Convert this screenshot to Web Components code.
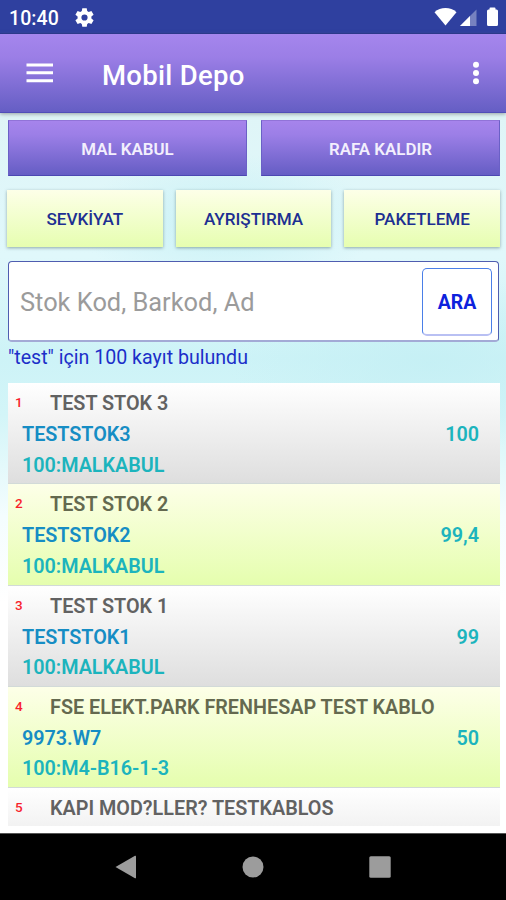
<!DOCTYPE html>
<html lang="tr">
<head>
<meta charset="UTF-8">
<title>Mobil Depo</title>
<style>
    body {
        margin: 0;
        font-family: Roboto, "Noto Sans", sans-serif;
    }
</style>
</head>
<body>
<depo-app></depo-app>

<script>
class StatusBar extends HTMLElement {
    constructor() {
        super();
        this.attachShadow({ mode: 'open' });
        this.shadowRoot.innerHTML = `
        <style>
            :host {
                display: flex;
                align-items: center;
                flex: none;
                box-sizing: border-box;
                height: 34px;
                padding: 1px 7px 0 9px;
                background: #2f409f;
                border-bottom: 1px solid #263592;
                color: #fff;
            }
            .time { font-size: 19.5px; font-weight: 500; width: 66px; letter-spacing: 0.1px; padding-top: 2px; }
            .space { flex: 1; }
            svg { display: block; fill: #fff; }
        </style>
        <span class="time">10:40</span>
        <svg width="19" height="19" viewBox="0 0 19 19">
            <path fill-rule="evenodd" d="M7.3.3h4.4l.5 2.8 1.5.9 2.7-1 2.2 3.8-2.2 1.8v1.8l2.2 1.8-2.2 3.8-2.7-1-1.5.9-.5 2.8H7.3l-.5-2.8-1.5-.9-2.7 1L.4 12.2l2.2-1.8V8.6L.4 6.8 2.6 3l2.7 1 1.500-.9zM9.5 6.400a3.100 3.100 0 1 0 0 6.200 3.100 3.100 0 0 0 0-6.200z"/>
        </svg>
        <span class="space"></span>
        <svg width="65" height="22" viewBox="0 0 65 22">
            <path d="M.5 6.2C6.5.6 16.5.6 22.5 6.2L11.5 19.5z"/>
            <path d="M26 20L42.5 3.5V20z" fill-opacity=".35"/>
            <path d="M26 20L36 10V20z"/>
            <path d="M53 5Q53 3.5 54.5 3.5H55.5V2.5Q55.5 1.5 56.5 1.5H60.5Q61.5 1.5 61.5 2.5V3.5H62.5Q64 3.5 64 5V18.5Q64 20 62.5 20H54.5Q53 20 53 18.5z"/>
        </svg>
        `;
    }
}
customElements.define('status-bar', StatusBar);

class AppBar extends HTMLElement {
    constructor() {
        super();
        this.attachShadow({ mode: 'open' });
        this.shadowRoot.innerHTML = `
        <style>
            :host {
                display: flex;
                align-items: center;
                flex: none;
                box-sizing: border-box;
                height: 79px;
                padding: 0 26px;
                background: linear-gradient(#a586ed, #9b7ee6 30%, #655ec4);
                border-bottom: 1px solid #504eb8;
                box-shadow: 0 1px 4px rgba(90, 90, 90, 0.55);
                color: #fff;
            }
            .title { flex: 1; padding: 4px 0 0 49px; font-size: 27.5px; font-weight: 500; letter-spacing: 0.3px; }
            svg { display: block; fill: #fff; }
        </style>
        <svg width="27" height="20" viewBox="0 0 27 20">
            <path d="M.5.5H27v3H.5zM.5 8.300H27v3H.5zM.5 16.200H27v3H.5z"/>
        </svg>
        <span class="title"><slot></slot></span>
        <svg width="8" height="24" viewBox="0 0 8 24">
            <circle cx="4" cy="3.7" r="3"/><circle cx="4" cy="12" r="3"/><circle cx="4" cy="20.3" r="3"/>
        </svg>
        `;
    }
}
customElements.define('app-bar', AppBar);

class MenuButton extends HTMLElement {
    constructor() {
        super();
        this.attachShadow({ mode: 'open' });
        this.shadowRoot.innerHTML = `
        <style>
            :host {
                display: block;
                flex: 1 1 0;
                height: 57px;
                font-size: 17.1px;
                font-weight: 500;
            }
            :host([primary]) { height: 56px; font-size: 16.9px; font-weight: 600; }
            button {
                display: block;
                box-sizing: border-box;
                width: 100%;
                height: 100%;
                padding: 1px 0 0;
                border: 0;
                font: inherit;
                color: #1d2f92;
                background: linear-gradient(#fdffe8, #e6feb0);
                box-shadow: 0 1px 3px rgba(60, 90, 90, 0.5);
            }
            :host([primary]) button {
                padding-top: 2px;
                color: #f3effd;
                background: linear-gradient(#a684ec, #9c7fe7 25%, #655dc4);
                border: 1px solid #6a60c6;
                border-top-color: #9173d8;
                border-bottom-color: #4c47b2;
                box-shadow: none;
            }
        </style>
        <button><slot></slot></button>
        `;
    }
}
customElements.define('menu-button', MenuButton);

class SearchBox extends HTMLElement {
    constructor() {
        super();
        this.attachShadow({ mode: 'open' });
        this.shadowRoot.innerHTML = `
        <style>
            :host {
                display: flex;
                align-items: center;
                box-sizing: border-box;
                height: 81px;
                margin-right: 1px;
                padding: 1px 6px 0 11px;
                background: #fff;
                border: 1px solid #4f5db0;
                border-bottom: 2px solid #a3aad6;
                border-radius: 4px;
            }
            .hint { flex: 1; font-size: 25.4px; color: #9b9b9b; padding-top: 1px; }
            button {
                box-sizing: border-box;
                width: 70px;
                height: 68px;
                padding: 3px 0 0;
                background: #fff;
                border: 1px solid #4a7fe8;
                border-bottom: 2px solid #b9c0f3;
                border-radius: 5px;
                font: 700 19.5px Roboto, sans-serif;
                color: #0d22dd;
            }
        </style>
        <span class="hint"></span>
        <button><slot></slot></button>
        `;
    }

    connectedCallback() {
        this.shadowRoot.querySelector('.hint').textContent = this.getAttribute('hint');
    }
}
customElements.define('search-box', SearchBox);

class StockRow extends HTMLElement {
    constructor() {
        super();
        this.attachShadow({ mode: 'open' });
        this.shadowRoot.innerHTML = `
        <style>
            :host {
                display: block;
                box-sizing: border-box;
                height: 101.25px;
                padding: 5px 21px 0 14px;
                background: linear-gradient(#fff, #dedede);
                border-bottom: 1px solid #d2dad8;
                font-size: 19.8px;
                font-weight: 600;
                line-height: 30px;
            }
            :host([even]) {
                background: linear-gradient(#fdffe8, #e5feae);
            }
            div { display: flex; align-items: center; height: 30px; letter-spacing: -0.02px; }
            .first { margin-left: -7px; height: 32px; }
            .no { width: 35px; font-size: 13.5px; font-weight: 500; color: #f81f2c; line-height: 26px; height: 30px; }
            .name { color: #626262; white-space: nowrap; letter-spacing: 0; }
            :host([even]) .name { color: #64694f; }
            .code { flex: 1; color: #168dc4; }
            .qty, .place { color: #1cb4bd; }
            .place { padding-top: 1px; }
        </style>
        <div class="first"><span class="no"></span><span class="name"></span></div>
        <div><span class="code"></span><span class="qty"></span></div>
        <div><span class="place"></span></div>
        `;
    }

    connectedCallback() {
        ['no', 'name', 'code', 'qty', 'place'].forEach((key) => {
            this.shadowRoot.querySelector('.' + key).textContent = this.getAttribute(key) || '';
        });
    }
}
customElements.define('stock-row', StockRow);

class NavBar extends HTMLElement {
    constructor() {
        super();
        this.attachShadow({ mode: 'open' });
        this.shadowRoot.innerHTML = `
        <style>
            :host {
                display: flex;
                align-items: center;
                justify-content: center;
                gap: 105px;
                flex: none;
                box-sizing: border-box;
                height: 67px;
                border-top: 1px solid #555;
                background: #000;
            }
            svg { display: block; fill: #9c9c9c; }
        </style>
        <svg width="22" height="24" viewBox="0 0 22 24"><path d="M.5 12L20 .8Q21 .3 21 1.5V22.5Q21 23.7 20 23.2z"/></svg>
        <svg width="22" height="22" viewBox="0 0 22 22"><circle cx="11" cy="11" r="10.5"/></svg>
        <svg width="22" height="22" viewBox="0 0 22 22"><rect x=".3" y=".3" width="21.4" height="21.4" rx="1.5"/></svg>
        `;
    }
}
customElements.define('nav-bar', NavBar);

class DepoApp extends HTMLElement {
    constructor() {
        super();
        this.attachShadow({ mode: 'open' });
        this.shadowRoot.innerHTML = `
        <style>
            :host {
                display: flex;
                flex-direction: column;
                width: 506px;
                height: 900px;
                overflow: hidden;
            }
            app-bar { z-index: 1; }
            main {
                flex: 1;
                min-height: 0;
                box-sizing: border-box;
                padding: 7px 6px 7px 8px;
                background:
                    radial-gradient(ellipse 200px 90px at 85% 250px, rgba(196, 239, 244, 0.8), transparent),
                    radial-gradient(ellipse 150px 70px at 45% 110px, rgba(196, 240, 245, 0.8), transparent),
                    linear-gradient(#dff5f7, #e0f8fb 20%, #cdf3f7 34%, #d3f5f8 42%, #f4fdfe 56%, #fff 68%);
                display: flex;
                flex-direction: column;
            }
            .row { display: flex; gap: 14px; margin-bottom: 14px; }
            .row.three { gap: 13px; margin: 0 0 14px -1px; }
            .result { font-size: 19.6px; line-height: 24px; height: 24px; margin: 4px 0 13px; color: #1c2fc9; }
            .list { flex: 1; min-height: 0; overflow: hidden; }
        </style>
        <status-bar></status-bar>
        <app-bar>Mobil Depo</app-bar>
        <main>
            <div class="row">
                <menu-button primary>MAL KABUL</menu-button>
                <menu-button primary>RAFA KALDIR</menu-button>
            </div>
            <div class="row three">
                <menu-button>SEVKİYAT</menu-button>
                <menu-button>AYRIŞTIRMA</menu-button>
                <menu-button>PAKETLEME</menu-button>
            </div>
            <search-box hint="Stok Kod, Barkod, Ad">ARA</search-box>
            <div class="result">"test" için 100 kayıt bulundu</div>
            <div class="list">
                <stock-row no="1" name="TEST STOK 3" code="TESTSTOK3" qty="100" place="100:MALKABUL"></stock-row>
                <stock-row even no="2" name="TEST STOK 2" code="TESTSTOK2" qty="99,4" place="100:MALKABUL"></stock-row>
                <stock-row no="3" name="TEST STOK 1" code="TESTSTOK1" qty="99" place="100:MALKABUL"></stock-row>
                <stock-row even no="4" name="FSE ELEKT.PARK FRENHESAP TEST KABLO" code="9973.W7" qty="50" place="100:M4-B16-1-3"></stock-row>
                <stock-row no="5" name="KAPI MOD?LLER? TESTKABLOS"></stock-row>
            </div>
        </main>
        <nav-bar></nav-bar>
        `;
    }
}
customElements.define('depo-app', DepoApp);
</script>
</body>
</html>
